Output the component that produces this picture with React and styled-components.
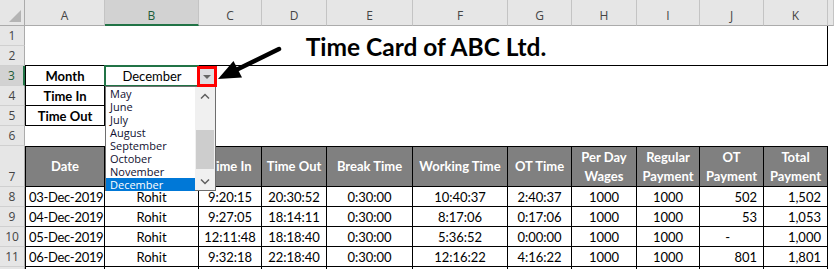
import React from 'react';
import styled, { createGlobalStyle, css } from 'styled-components';

const GlobalStyle = createGlobalStyle`
  html, body {
    margin: 0;
    padding: 0;
    background: #fff;
  }
  body {
    width: 834px;
    height: 269px;
    overflow: hidden;
    font-family: Lato, "Liberation Sans", sans-serif;
  }
`;

const COLS = ['A', 'B', 'C', 'D', 'E', 'F', 'G', 'H', 'I', 'J', 'K'];

// B7 sits under the open list, so it is left empty
const HEADERS = [
  ['Date'], [], ['Time In'], ['Time Out'], ['Break Time'], ['Working Time'], ['OT Time'],
  ['Per Day', 'Wages'], ['Regular', 'Payment'], ['OT', 'Payment'], ['Total', 'Payment'],
];

const ALIGN = ['left', 'center', 'center', 'center', 'center', 'center', 'center', 'center', 'center', 'right', 'right'];

const ROWS = [
  ['03-Dec-2019', 'Rohit', '9:20:15', '20:30:52', '0:30:00', '10:40:37', '2:40:37', '1000', '1000', '502', '1,502'],
  ['04-Dec-2019', 'Rohit', '9:27:05', '18:14:11', '0:30:00', '8:17:06', '0:17:06', '1000', '1000', '53', '1,053'],
  ['05-Dec-2019', 'Rohit', '12:11:48', '18:18:40', '0:30:00', '5:36:52', '0:00:00', '1000', '1000', '-', '1,000'],
  ['06-Dec-2019', 'Rohit', '9:32:18', '22:18:40', '0:30:00', '12:16:22', '4:16:22', '1000', '1000', '801', '1,801'],
];

const MONTHS = ['May', 'June', 'July', 'August', 'September', 'October', 'November', 'December'];

// the worksheet itself: row header column + A..K + rest of the window
const Sheet = styled.div`
  position: relative;
  display: grid;
  grid-template-columns: 25px 80px 94px 63px 65px 86px 95px 64px 65px 63px 64px 64px 1fr;
  grid-template-rows: 26px repeat(6, 20px) 41px repeat(5, 20px);
  width: 834px;
  height: 269px;
  overflow: hidden;
  font-family: Lato, "Liberation Sans", sans-serif;
  font-size: 13px;
  color: #000;
`;

const Corner = styled.div`
  position: relative;
  background: #e6e6e6;
  border-right: 1px solid #ababab;
  border-bottom: 1px solid #ababab;
  box-sizing: border-box;

  &::after {
    content: '';
    position: absolute;
    right: 3px;
    bottom: 3px;
    border-left: 12px solid transparent;
    border-bottom: 12px solid #b4b4b4;
  }
`;

const ColHead = styled.div`
  display: flex;
  align-items: center;
  justify-content: center;
  box-sizing: border-box;
  padding-top: 6px;
  background: ${(p) => (p.$active ? '#d2d2d2' : '#e6e6e6')};
  border-right: 1px solid #c4c4c4;
  border-bottom: ${(p) => (p.$active ? '2px solid #217346' : '1px solid #ababab')};
  color: ${(p) => (p.$active ? '#1d5c38' : '#444')};
  font-family: "Open Sans", "Noto Sans", sans-serif;
  font-size: 12px;
`;

const RowHead = styled.div`
  display: flex;
  align-items: flex-end;
  justify-content: center;
  box-sizing: border-box;
  padding-bottom: 1px;
  background: ${(p) => (p.$active ? '#d2d2d2' : '#e6e6e6')};
  border-bottom: 1px solid #d0d0d0;
  border-right: ${(p) => (p.$active ? '2px solid #217346' : '1px solid #ababab')};
  color: ${(p) => (p.$active ? '#1d5c38' : '#444')};
  font-family: "Open Sans", "Noto Sans", sans-serif;
  font-size: 12px;
  line-height: 17px;
`;

const Blank = styled.div``;

const Title = styled.div`
  grid-column: 2 / 13;
  grid-row: span 2;
  display: flex;
  align-items: center;
  justify-content: center;
  box-sizing: border-box;
  border-right: 1px solid #000;
  border-bottom: 1px solid #000;
  font-size: 24.5px;
  font-weight: 700;
  padding-top: 1px;
`;

const Cell = styled.div`
  position: relative;
  display: flex;
  align-items: center;
  justify-content: ${(p) => (p.$align === 'left' ? 'flex-start' : p.$align === 'right' ? 'flex-end' : 'center')};
  box-sizing: border-box;
  padding: 0 ${(p) => p.$inset ?? (p.$align === 'right' ? 6 : 3)}px 0 3px;
  white-space: nowrap;
  letter-spacing: ${(p) => (p.$align === 'left' ? '-0.3px' : 'normal')};
  font-weight: ${(p) => (p.$bold ? 700 : 400)};
  ${(p) =>
    p.$boxed &&
    css`
      border-right: 1px solid #000;
      border-bottom: 1px solid #000;
    `}
  ${(p) => p.$first && 'border-left: 1px solid #000;'}
`;

const HeadCell = styled.div`
  display: flex;
  align-items: center;
  justify-content: center;
  box-sizing: border-box;
  text-align: center;
  background: #808080;
  color: #fff;
  font-weight: 700;
  line-height: 19px;
  white-space: nowrap;
  border-top: 1px solid #000;
  border-right: 1px solid #000;
  border-bottom: 1px solid #000;
  ${(p) => p.$first && 'border-left: 1px solid #000;'}
`;

const SelectFrame = styled.div`
  position: absolute;
  top: -1px;
  left: -1px;
  right: 0;
  bottom: -1px;
  border: 2px solid #217346;
  pointer-events: none;
`;

const DropButton = styled.div`
  position: absolute;
  top: 0;
  right: -18px;
  width: 20px;
  height: 21px;
  box-sizing: border-box;
  border: 3px solid #ff0000;
  background: #dedee2;
  display: flex;
  align-items: center;
  justify-content: center;
  z-index: 5;

  &::after {
    content: '';
    border-left: 4px solid transparent;
    border-right: 4px solid transparent;
    border-top: 4px solid #666;
  }
`;

const ListBox = styled.div`
  position: absolute;
  top: 100%;
  left: 0;
  width: 111px;
  height: 105px;
  box-sizing: border-box;
  display: flex;
  background: #fff;
  border: 1px solid #6e6e6e;
  z-index: 4;
`;

const Items = styled.ul`
  flex: 1;
  margin: 0;
  padding: 0;
  list-style: none;
  font-family: "Open Sans", "Noto Sans", sans-serif;
  font-size: 11px;
`;

const Item = styled.li`
  height: 13px;
  line-height: 13px;
  padding-left: 4px;
  color: ${(p) => (p.$selected ? '#fff' : '#101030')};
  background: ${(p) => (p.$selected ? '#0078d7' : 'transparent')};
`;

const ScrollBar = styled.div`
  width: 20px;
  display: flex;
  flex-direction: column;
  background: #f0f0f0;
`;

const ScrollBtn = styled.div`
  height: 17px;
  display: flex;
  align-items: center;
  justify-content: center;
`;

const Track = styled.div`
  flex: 1;
  padding: 26px 1px 0;
`;

const Thumb = styled.div`
  height: 39px;
  background: #cdcdcd;
`;

const Annotation = styled.svg`
  position: absolute;
  left: 0;
  top: 0;
  z-index: 6;
  pointer-events: none;
`;

function Chevron({ up }) {
  return (
    <svg width="10" height="6" viewBox="0 0 10 6">
      <polyline
        points={up ? '1,5.5 5,1.5 9,5.5' : '1,0.5 5,4.5 9,0.5'}
        fill="none"
        stroke="#606060"
        strokeWidth="1.5"
      />
    </svg>
  );
}

function blanks(n, key) {
  return Array.from({ length: n }, (_, i) => <Blank key={`${key}-${i}`} />);
}

export default function App() {
  return (
    <>
      <GlobalStyle />
      <Sheet>
        <Corner />
        {COLS.map((c) => (
          <ColHead key={c} $active={c === 'B'}>{c}</ColHead>
        ))}
        <ColHead />

        <RowHead>1</RowHead>
        <Title>Time Card of ABC Ltd.</Title>
        <Blank />
        <RowHead>2</RowHead>
        <Blank />

        <RowHead $active>3</RowHead>
        <Cell $boxed $first $bold>Month</Cell>
        <Cell>
          December
          <SelectFrame />
          <DropButton />
          <ListBox>
            <Items>
              {MONTHS.map((m) => (
                <Item key={m} $selected={m === 'December'}>{m}</Item>
              ))}
            </Items>
            <ScrollBar>
              <ScrollBtn><Chevron up /></ScrollBtn>
              <Track><Thumb /></Track>
              <ScrollBtn><Chevron /></ScrollBtn>
            </ScrollBar>
          </ListBox>
        </Cell>
        {blanks(10, 'r3')}

        <RowHead>4</RowHead>
        <Cell $boxed $first $bold>Time In</Cell>
        <Cell $boxed />
        {blanks(10, 'r4')}

        <RowHead>5</RowHead>
        <Cell $boxed $first $bold>Time Out</Cell>
        <Cell $boxed />
        {blanks(10, 'r5')}

        <RowHead>6</RowHead>
        {blanks(12, 'r6')}

        <RowHead>7</RowHead>
        {HEADERS.map((h, i) => (
          <HeadCell key={i} $first={i === 0}>
            <span>
              {h.map((line, j) => (
                <React.Fragment key={line}>
                  {j > 0 && <br />}
                  {line}
                </React.Fragment>
              ))}
            </span>
          </HeadCell>
        ))}
        <Blank />

        {ROWS.map((row, r) => (
          <React.Fragment key={row[0]}>
            <RowHead>{r + 8}</RowHead>
            {row.map((v, i) => (
              <Cell
                key={i}
                $boxed
                $first={i === 0}
                $align={ALIGN[i]}
                $inset={v === '-' ? 33 : undefined}
              >
                {v}
              </Cell>
            ))}
            <Blank />
          </React.Fragment>
        ))}

        <RowHead />
        {COLS.map((c, i) => (
          <Cell key={c} $boxed $first={i === 0} />
        ))}
        <Blank />

        <Annotation width="834" height="269">
          <line x1="279" y1="49" x2="236" y2="70" stroke="#000" strokeWidth="4.5" strokeLinecap="round" />
          <polygon points="218,79 233.5,61 242,77.5" fill="#000" />
        </Annotation>
      </Sheet>
    </>
  );
}
